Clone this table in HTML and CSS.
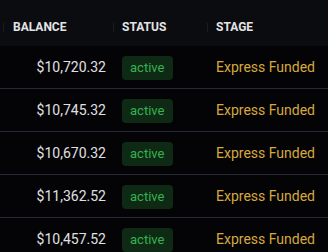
FILE: index.html
```html
<!DOCTYPE html>
<html>
<head>
<meta charset="utf-8">
<link rel="stylesheet" href="styles.css">
</head>
<body>
<div class="table">
  <div class="row head">
    <div class="cell bal"><span class="sep"></span>BALANCE</div>
    <div class="cell status"><span class="sep"></span>STATUS</div>
    <div class="cell stage"><span class="sep"></span>STAGE</div>
  </div>
  <div class="row">
    <div class="cell bal num">$10,720.32</div>
    <div class="cell status"><span class="badge">active</span></div>
    <div class="cell stage gold">Express Funded</div>
  </div>
  <div class="row">
    <div class="cell bal num">$10,745.32</div>
    <div class="cell status"><span class="badge">active</span></div>
    <div class="cell stage gold">Express Funded</div>
  </div>
  <div class="row">
    <div class="cell bal num">$10,670.32</div>
    <div class="cell status"><span class="badge">active</span></div>
    <div class="cell stage gold">Express Funded</div>
  </div>
  <div class="row">
    <div class="cell bal num">$11,362.52</div>
    <div class="cell status"><span class="badge">active</span></div>
    <div class="cell stage gold">Express Funded</div>
  </div>
  <div class="row">
    <div class="cell bal num">$10,457.52</div>
    <div class="cell status"><span class="badge">active</span></div>
    <div class="cell stage gold">Express Funded</div>
  </div>
</div>
</body>
</html>
```
FILE: styles.css
```css
html, body {
  margin: 0;
  padding: 0;
  background: #040406;
  font-family: Roboto, "Liberation Sans", sans-serif;
  overflow: hidden;
}
.table {
  width: 328px;
}
.row {
  display: grid;
  grid-template-columns: 113px 94px 1fr;
  height: 42px;
  align-items: center;
  border-bottom: 1px solid #262835;
}
.row.head {
  height: 45px;
  background: #0b0c10;
  border-bottom: 1px solid #0b0c10;
}
.cell {
  position: relative;
  display: flex;
  align-items: center;
  height: 100%;
  padding-left: 9px;
  font-size: 14px;
  font-weight: 400;
}
.head .cell {
  font-size: 12px;
  font-weight: 700;
  color: #e4e4e6;
  padding-left: 13px;
  padding-top: 8px;
  box-sizing: border-box;
}
.head .cell.status, .head .cell.stage { padding-left: 9px; }
.head .bal { padding-left: 13px; }
.sep {
  position: absolute;
  left: 3px;
  top: 23px;
  width: 1px;
  height: 9px;
  background: #1a1c22;
}
.head .status .sep, .head .stage .sep { left: 0; }
.num {
  justify-content: flex-end;
  padding-right: 7px;
  padding-left: 0;
  color: #e0e0e2;
}
.badge {
  display: inline-block;
  height: 24px;
  line-height: 24px;
  padding: 0 9px 0 8px;
  font-size: 13px;
  font-weight: 400;
  color: #35b24f;
  background: #0e2a15;
  border-radius: 4px;
  margin-top: 1px;
}
.gold {
  color: #d6a93e;
}
```
